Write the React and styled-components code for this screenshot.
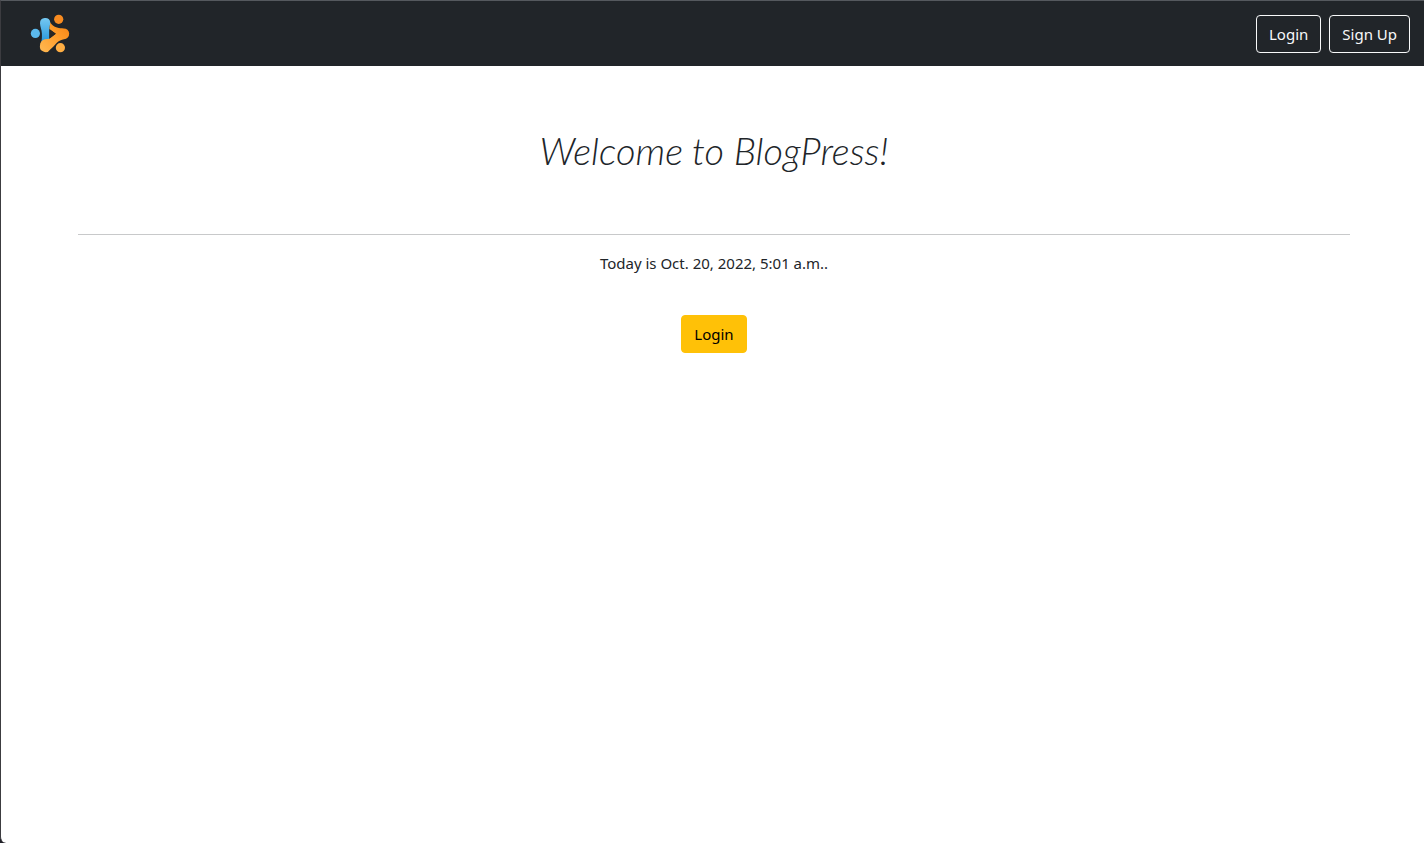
import React from "react";
import styled, { createGlobalStyle, css } from "styled-components";

const GlobalStyle = createGlobalStyle`
  *, *::before, *::after { box-sizing: border-box; }
  body {
    margin: 0;
    background: #202028;
    color: #212529;
    font-family: "Segoe UI", "Noto Sans", "Liberation Sans", sans-serif;
    font-size: 15px;
    line-height: 24px;
  }
`;

const Page = styled.div`
  min-height: 100vh;
  background: #fff;
  border-top: 1px solid #55595e;
  border-left: 1px solid #3c3c40;
  border-bottom-left-radius: 6px;
`;

const Navbar = styled.header`
  display: flex;
  align-items: center;
  justify-content: space-between;
  padding: 13px 14px 12px 28px;
  background: #212529;
`;

const Brand = styled.a`
  display: flex;
`;

const Logo = styled.svg`
  display: block;
  width: 42px;
  height: 40px;
`;

const Actions = styled.nav`
  display: flex;
  gap: 8px;
`;

const variants = {
  outline: css`
    color: #f8f9fa;
    background: transparent;
    border-color: #f8f9fa;
  `,
  warning: css`
    color: #000;
    background: #ffc107;
    border-color: #ffc107;
  `,
};

const Button = styled.button`
  padding: 6px 12px;
  border: 1px solid;
  border-radius: 4px;
  font: inherit;
  white-space: nowrap;
  cursor: pointer;
  ${({ $variant }) => variants[$variant]}
`;

const Main = styled.main`
  display: flex;
  flex-direction: column;
  align-items: center;
  padding: 48px 74px 48px 77px;
  text-align: center;
`;

const Title = styled.h1`
  margin: 0;
  padding: 12px 0 48px;
  font-family: Lato, "Liberation Sans", cursive;
  font-size: 38px;
  font-style: italic;
  font-weight: 300;
  line-height: 48px;
`;

const Divider = styled.hr`
  width: 100%;
  height: 1px;
  margin: 12px 0 16px;
  border: 0;
  background: #c8c9ca;
`;

const Today = styled.p`
  margin: 0 0 40px;
`;

function BrandLogo() {
  return (
    <Logo viewBox="0 0 42 40" role="img" aria-label="BlogPress">
      <defs>
        <linearGradient id="blue" x1="0" y1="0" x2="0" y2="1">
          <stop offset="0" stopColor="#75c8f2" />
          <stop offset="1" stopColor="#2797dc" />
        </linearGradient>
        <linearGradient id="orange" x1="0" y1="1" x2="1" y2="0">
          <stop offset="0" stopColor="#ffb953" />
          <stop offset="0.55" stopColor="#ff9d2b" />
          <stop offset="1" stopColor="#f58212" />
        </linearGradient>
      </defs>
      <path
        d="M11 9.2A5.2 5.2 0 0 1 21.3 8.2L20.4 15V25L12.2 28.5C12.9 26 13 23 12.9 19.5C12.8 15.5 11.1 12.5 11 9.2Z"
        fill="url(#blue)"
      />
      <path
        d="M21.3 8.2C22.4 10.6 25 12.6 28 13.5C30.4 14.2 32.6 14.4 34.6 14.4A5.4 5.4 0 0 1 35 25.2C32.4 25.6 29.8 26.8 27.6 29C25.4 31.2 23.6 34 21.2 35.4A5.6 5.6 0 0 1 11 31.2C10.9 28.2 13 26 16 25.2L20.4 24.8L26.8 19.8L20.4 15Z"
        fill="url(#orange)"
      />
      <path d="M20.4 15.2 26.8 19.8 20.4 24.6Z" fill="#2a2724" />
      <circle cx="6.4" cy="19.4" r="4.6" fill="#5bb9ec" />
      <circle cx="29.7" cy="5.3" r="4.6" fill="#f88b20" />
      <circle cx="31.4" cy="33.7" r="4.6" fill="#ffae43" />
    </Logo>
  );
}

export default function App() {
  return (
    <>
      <GlobalStyle />
      <Page>
        <Navbar>
          <Brand href="#" aria-label="BlogPress home">
            <BrandLogo />
          </Brand>
          <Actions aria-label="Account">
            <Button type="button" $variant="outline">Login</Button>
            <Button type="button" $variant="outline">Sign Up</Button>
          </Actions>
        </Navbar>
        <Main>
          <Title>Welcome to BlogPress!</Title>
          <Divider />
          <Today>Today is Oct. 20, 2022, 5:01 a.m..</Today>
          <Button type="button" $variant="warning">Login</Button>
        </Main>
      </Page>
    </>
  );
}
